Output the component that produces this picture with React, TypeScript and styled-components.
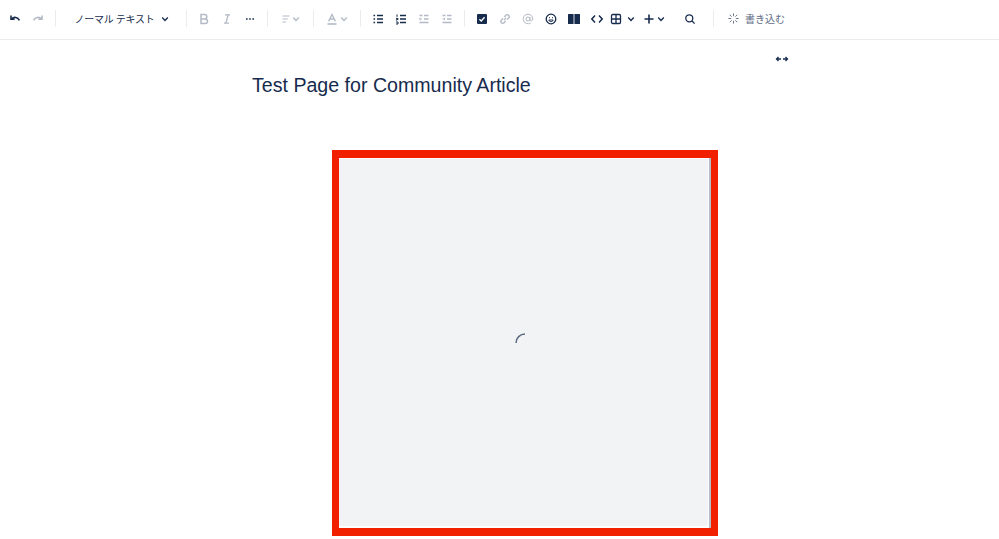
import { ReactNode } from "react";
import styled, { createGlobalStyle } from "styled-components";

const navy = "#172B4D";
const faded = "#B3BAC5";

const GlobalStyle = createGlobalStyle`
    html, body {
        margin: 0;
        padding: 0;
        background: #fff;
        overflow: hidden;
    }
    body {
        font-family: "Liberation Sans", "Noto Sans CJK JP", sans-serif;
    }
`;

const Page = styled.div`
    width: 999px;
    height: 539px;
    display: flex;
    flex-direction: column;
    overflow: hidden;
`;

const Toolbar = styled.div`
    height: 37px;
    padding-bottom: 2px;
    flex-shrink: 0;
    display: flex;
    align-items: center;
    padding-left: 3px;
    border-bottom: 1px solid #ebecf0;
`;

const ToolButton = styled.div<{ $width?: number; $dim?: boolean; $gap?: number }>`
    width: ${({ $width }) => $width ?? 23}px;
    height: 24px;
    flex-shrink: 0;
    display: flex;
    align-items: center;
    justify-content: center;
    gap: ${({ $gap }) => $gap ?? 2}px;
    color: ${({ $dim }) => ($dim ? faded : navy)};
`;

const SearchButton = styled(ToolButton)`
    margin-left: 3px;
`;

const Separator = styled.div`
    width: 1px;
    height: 17px;
    margin: 0 5px 0 6px;
    flex-shrink: 0;
    background: #ebecf0;
`;

const StyleLabel = styled.span`
    font-family: "Noto Sans CJK JP", sans-serif;
    font-size: 10px;
    letter-spacing: -0.2px;
    color: ${navy};
    white-space: nowrap;
    margin: 0 4px 0 2px;
`;

const AiButton = styled.div`
    display: flex;
    align-items: center;
    gap: 5px;
    margin-left: 8px;
    color: #5e6c84;
`;

const AiLabel = styled.span`
    font-family: "Noto Sans CJK JP", sans-serif;
    font-size: 10px;
    white-space: nowrap;
`;

const Editor = styled.div`
    position: relative;
    flex: 1;
    display: flex;
    flex-direction: column;
    padding-left: 252px;
`;

const WidthToggle = styled.div`
    position: absolute;
    left: 775px;
    top: 15px;
    display: flex;
    color: ${navy};
`;

const Title = styled.h1`
    margin: 32px 0 0;
    font-size: 19.6px;
    line-height: 26px;
    font-weight: 400;
    color: ${navy};
    white-space: nowrap;
`;

const Frame = styled.div`
    width: 386px;
    height: 386px;
    box-sizing: border-box;
    margin: 52px 0 0 80px;
    border: 7px solid #f12100;
    border-top-width: 8px;
    border-bottom-width: 8px;
    background: #fff;
    display: flex;
`;

const LoadingPanel = styled.div`
    flex: 1;
    margin: 1px 1px 2px 0;
    border-bottom-right-radius: 3px;
    background: #f2f3f4;
    display: flex;
    align-items: center;
    justify-content: center;
`;

const ScrollEdge = styled.div`
    width: 2px;
    flex-shrink: 0;
    background: #b8bcc4;
`;

const Spinner = styled.svg`
    margin: 1px 0 0 2px;
`;

function Icon({ children, size = 14 }: { children: ReactNode; size?: number }) {
    return (
        <svg width={size} height={size} viewBox="0 0 14 14" fill="none" stroke="currentColor" strokeWidth="1.3">
            {children}
        </svg>
    );
}

function Chevron() {
    return (
        <svg width="8" height="8" viewBox="0 0 8 8" fill="none" stroke="currentColor" strokeWidth="1.4">
            <path d="M1.2 2.6 4 5.4l2.8-2.8" />
        </svg>
    );
}

function Lines({ y }: { y: number[] }) {
    return <path d={y.map((v) => `M6 ${v}h6`).join("")} />;
}

function App() {
    return (
        <Page>
            <GlobalStyle />
            <Toolbar>
                <ToolButton>
                    <Icon><path d="M3 3.5v3.6h3.6" strokeWidth="1.6" /><path d="M3.4 7c2.6-2.6 6.4-2 8 1.4" strokeWidth="1.6" /></Icon>
                </ToolButton>
                <ToolButton $dim>
                    <Icon><path d="M11 3.5v3.6H7.4" strokeWidth="1.6" /><path d="M10.6 7C8 4.4 4.2 5 2.6 8.4" strokeWidth="1.6" /></Icon>
                </ToolButton>
                <Separator />
                <ToolButton $width={119}>
                    <StyleLabel>ノーマル テキスト</StyleLabel>
                    <Chevron />
                </ToolButton>
                <Separator />
                <ToolButton $dim>
                    <Icon><path d="M4 2.5h3.6a2.2 2.2 0 0 1 0 4.4H4zM4 6.9h4.2a2.3 2.3 0 0 1 0 4.6H4z" strokeWidth="1.5" /></Icon>
                </ToolButton>
                <ToolButton $dim>
                    <Icon><path d="M5 2.8h5M4 11.2h5M8.2 2.8l-2.4 8.4" /></Icon>
                </ToolButton>
                <ToolButton>
                    <Icon><path d="M3 7h1.6M6.2 7h1.6M9.4 7H11" strokeWidth="1.7" /></Icon>
                </ToolButton>
                <Separator />
                <ToolButton $width={34} $dim $gap={0}>
                    <Icon size={12}><path d="M3 3.5h8M3 7h6M3 10.5h4" /></Icon>
                    <Chevron />
                </ToolButton>
                <Separator />
                <ToolButton $width={35} $dim $gap={1}>
                    <Icon><path d="M3.6 9.4 7 2.4l3.4 7M4.8 7h4.4" /><path d="M2.5 12h9" strokeWidth="1.6" /></Icon>
                    <Chevron />
                </ToolButton>
                <Separator />
                <ToolButton>
                    <Icon><Lines y={[3.5, 7, 10.5]} /><path d="M2.5 3.5h1.6M2.5 7h1.6M2.5 10.5h1.6" strokeWidth="1.6" /></Icon>
                </ToolButton>
                <ToolButton>
                    <Icon><Lines y={[3.5, 7, 10.5]} /><path d="M3 2.4v2.4M2 6.4h2v1.2H2.4v1M2 10h2v2H2" strokeWidth="1" /></Icon>
                </ToolButton>
                <ToolButton $dim>
                    <Icon><path d="M7 3.5h4.5M7 7h4.5M2.5 10.5h9M2.5 3.5h3" /><path d="M5 7H2.5M3.6 5.8 2.4 7l1.2 1.2" strokeWidth="1" /></Icon>
                </ToolButton>
                <ToolButton $dim>
                    <Icon><path d="M7 3.5h4.5M7 7h4.5M2.5 10.5h9M2.5 3.5h3" /><path d="M2.5 7H5M3.9 5.8 5.1 7 3.9 8.2" strokeWidth="1" /></Icon>
                </ToolButton>
                <Separator />
                <ToolButton>
                    <Icon>
                        <rect x="2" y="2" width="10" height="10" rx="1" fill="currentColor" stroke="none" />
                        <path d="M4.4 7.2 6.2 9l3.4-3.8" stroke="#fff" />
                    </Icon>
                </ToolButton>
                <ToolButton $dim>
                    <Icon>
                        <path d="m6 8 2-2M5 6.4 3.4 8a1.9 1.9 0 0 0 2.7 2.7L7.6 9M9 7.6 10.6 6a1.9 1.9 0 0 0-2.7-2.7L6.4 5" />
                    </Icon>
                </ToolButton>
                <ToolButton $dim>
                    <Icon>
                        <circle cx="7" cy="7" r="2" strokeWidth="1" />
                        <path d="M9 5v2.8c0 1.6 2.8 1.4 2.8-.8A4.8 4.8 0 1 0 9.6 11" strokeWidth="1" />
                    </Icon>
                </ToolButton>
                <ToolButton>
                    <Icon>
                        <circle cx="7" cy="7" r="4.8" />
                        <path d="M5 5.6h.8M8.2 5.6H9" />
                        <path d="M4.8 8h4.4c-.3 1.2-1.2 1.5-2.2 1.5S5.1 9.2 4.8 8z" strokeWidth="1" />
                    </Icon>
                </ToolButton>
                <ToolButton>
                    <Icon>
                        <rect x="1" y="2" width="5.6" height="10" rx=".6" fill="currentColor" stroke="none" />
                        <rect x="7.4" y="2" width="5.6" height="10" rx=".6" fill="currentColor" stroke="none" />
                    </Icon>
                </ToolButton>
                <ToolButton>
                    <Icon><path d="M5 3.5 1.8 7 5 10.5M9 3.5 12.2 7 9 10.5" strokeWidth="1.5" /></Icon>
                </ToolButton>
                <ToolButton $width={28} $gap={4.5}>
                    <Icon>
                        <rect x="2.5" y="2.5" width="9" height="9" rx="1.2" />
                        <path d="M7 2.5v9M2.5 7h9" />
                    </Icon>
                    <Chevron />
                </ToolButton>
                <ToolButton $width={34} $gap={1}>
                    <Icon><path d="M7 2.5v9M2.5 7h9" strokeWidth="1.6" /></Icon>
                    <Chevron />
                </ToolButton>
                <SearchButton $width={34}>
                    <Icon>
                        <circle cx="6.3" cy="6.3" r="3.5" />
                        <path d="m8.8 8.8 2.8 2.8" />
                    </Icon>
                </SearchButton>
                <Separator />
                <AiButton>
                    <Icon size={13}>
                        <path d="M7 1.5v3M7 9.5v3M1.5 7h3M9.5 7h3M3 3l2 2M9 9l2 2M11 3 9 5M5 9l-2 2" strokeWidth="1" />
                    </Icon>
                    <AiLabel>書き込む</AiLabel>
                </AiButton>
            </Toolbar>
            <Editor>
                <WidthToggle>
                    <svg width="14" height="8" viewBox="0 0 14 8" fill="none" stroke="currentColor" strokeWidth="1.3">
                        <path d="M6 4H1.5M3.5 2 1.5 4l2 2M8 4h4.5M10.5 2l2 2-2 2" />
                    </svg>
                </WidthToggle>
                <Title>Test Page for Community Article</Title>
                <Frame>
                    <LoadingPanel>
                        <Spinner width="20" height="20" viewBox="0 0 20 20" fill="none" stroke="#5e6c84" strokeWidth="1.5">
                            <path d="M1 10A9 9 0 0 1 10 1" />
                        </Spinner>
                    </LoadingPanel>
                    <ScrollEdge />
                </Frame>
            </Editor>
        </Page>
    );
}

export default App;
